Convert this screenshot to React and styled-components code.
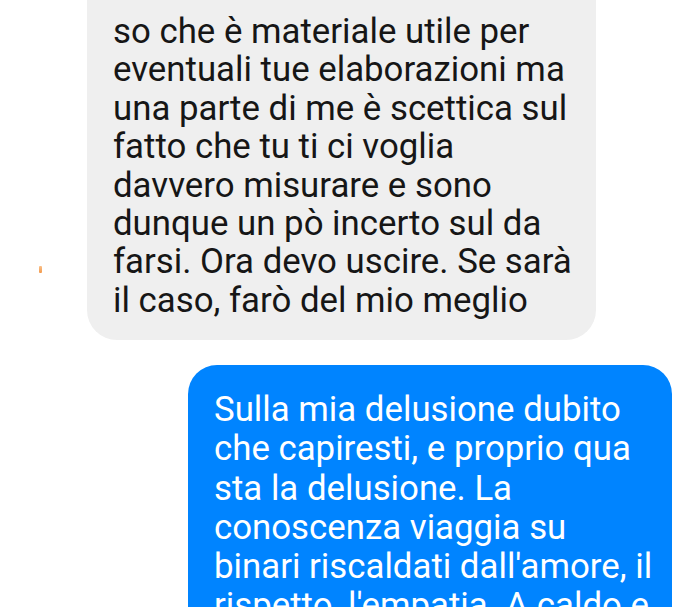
import React from "react";
import styled, { createGlobalStyle } from "styled-components";

const Global = createGlobalStyle`
  html, body { margin: 0; padding: 0; background: #ffffff; }
  body { font-family: Roboto, "Noto Sans", "Liberation Sans", sans-serif; overflow: hidden; }
`;

const Thread = styled.div`
  width: 684px;
  height: 607px;
  overflow: hidden;
  display: flex;
  flex-direction: column;
  gap: 25px;
  background: #ffffff;
`;

const Row = styled.div`
  display: flex;
  justify-content: ${(p) => (p.$mine ? "flex-end" : "flex-start")};
  align-items: flex-end;
  padding-right: ${(p) => (p.$mine ? "12px" : "0")};
`;

const AvatarSlot = styled.div`
  width: 87px;
  flex: none;
  display: flex;
  justify-content: flex-start;
  padding-left: 39px;
  box-sizing: border-box;
  padding-bottom: 67px;
`;

const Mark = styled.span`
  display: block;
  width: 3px;
  height: 7px;
  border-radius: 1px;
  background: linear-gradient(#f9c08a, #f39a4c);
`;

const Bubble = styled.div`
  box-sizing: border-box;
  width: ${(p) => p.$w}px;
  font-size: 34.8px;
  line-height: ${(p) => (p.$mine ? "39.2px" : "38.4px")};
  letter-spacing: 0;
  padding: ${(p) => (p.$mine ? "25px 16px 0 26px" : "12px 16px 21px 26px")};
  border-radius: ${(p) => (p.$mine ? "29px 29px 0 0" : "0 0 30px 30px")};
  background: ${(p) => (p.$mine ? "#0084ff" : "#efefef")};
  color: ${(p) => (p.$mine ? "#ffffff" : "#161616")};
  white-space: nowrap;
`;

const grayLines = [
  "so che è materiale utile per",
  "eventuali tue elaborazioni ma",
  "una parte di me è scettica sul",
  "fatto che tu ti ci voglia",
  "davvero misurare e sono",
  "dunque un pò incerto sul da",
  "farsi. Ora devo uscire. Se sarà",
  "il caso, farò del mio meglio",
];

const blueLines = [
  "Sulla mia delusione dubito",
  "che capiresti, e proprio qua",
  "sta la delusione. La",
  "conoscenza viaggia su",
  "binari riscaldati dall'amore, il",
  "rispetto, l'empatia. A caldo e",
];

const Lines = ({ lines }) =>
  lines.map((l, i) => (
    <React.Fragment key={i}>
      {l}
      {i < lines.length - 1 && <br />}
    </React.Fragment>
  ));

export default function App() {
  return (
    <>
      <Global />
      <Thread>
        <Row>
          <AvatarSlot>
            <Mark />
          </AvatarSlot>
          <Bubble $w={509}>
            <Lines lines={grayLines} />
          </Bubble>
        </Row>
        <Row $mine>
          <Bubble $mine $w={484}>
            <Lines lines={blueLines} />
          </Bubble>
        </Row>
      </Thread>
    </>
  );
}
